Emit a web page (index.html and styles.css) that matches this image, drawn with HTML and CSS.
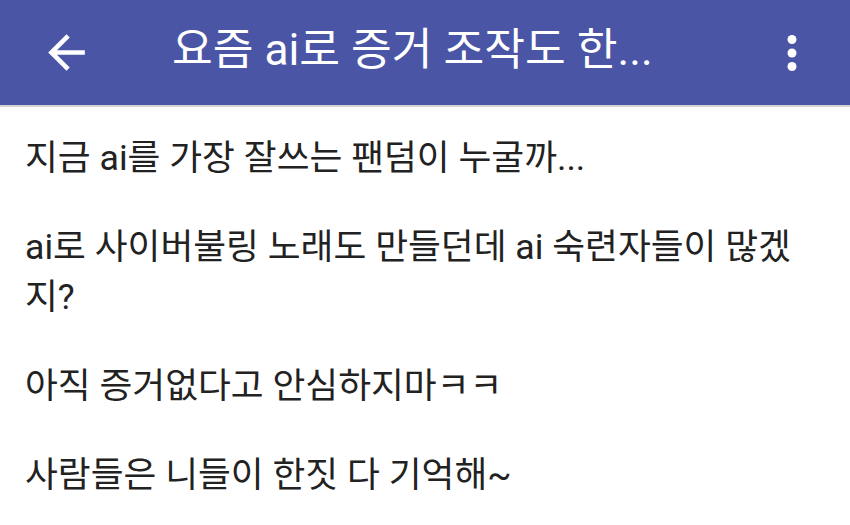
FILE: index.html
```html
<!DOCTYPE html>
<html lang="ko">
<head>
<meta charset="utf-8">
<link rel="stylesheet" href="styles.css">
</head>
<body>
<header class="appbar">
  <div class="nav-btn">
    <svg viewBox="0 0 24 24" width="55" height="55"><path fill="#fff" d="M20 11H7.83l5.59-5.59L12 4l-8 8 8 8 1.41-1.41L7.83 13H20v-2z"/></svg>
  </div>
  <h1 class="title">요즘 ai로 증거 조작도 한...</h1>
  <div class="menu-btn">
    <svg viewBox="0 0 24 24" width="54" height="54"><circle cx="12" cy="6" r="2" fill="#fff"/><circle cx="12" cy="12" r="2" fill="#fff"/><circle cx="12" cy="18" r="2" fill="#fff"/></svg>
  </div>
</header>
<main class="content">
  <p class="line">지금 ai를 가장 잘쓰는 팬덤이 누굴까...</p>
  <p class="line">ai로 사이버불링 노래도 만들던데 ai 숙련자들이 많겠지?</p>
  <p class="line">아직 증거없다고 안심하지마ㅋㅋ</p>
  <p class="line">사람들은 니들이 한짓 다 기억해~</p>
</main>
</body>
</html>
```
FILE: styles.css
```css
html, body {
  margin: 0;
  padding: 0;
  background: #fff;
  font-family: Roboto, "Noto Sans CJK KR", sans-serif;
}
.appbar {
  height: 105px;
  background: #4a55a6;
  border-bottom: 2px solid #d4d4d8;
  display: flex;
  align-items: center;
  color: #fff;
}
.nav-btn {
  width: 55px;
  height: 55px;
  margin-left: 39px;
  display: flex;
}
.title {
  margin: 0 0 0 78px;
  font-size: 44.3px;
  font-weight: 400;
  flex: 1;
  white-space: nowrap;
  line-height: 1;
  padding-bottom: 4px;
}
.menu-btn {
  width: 54px;
  height: 54px;
  margin-right: 31px;
  display: flex;
}
.content {
  padding: 26px 28px 0 25px;
}
.line {
  margin: 0 0 39px;
  font-size: 35.7px;
  line-height: 50px;
  color: #222;
}
```
